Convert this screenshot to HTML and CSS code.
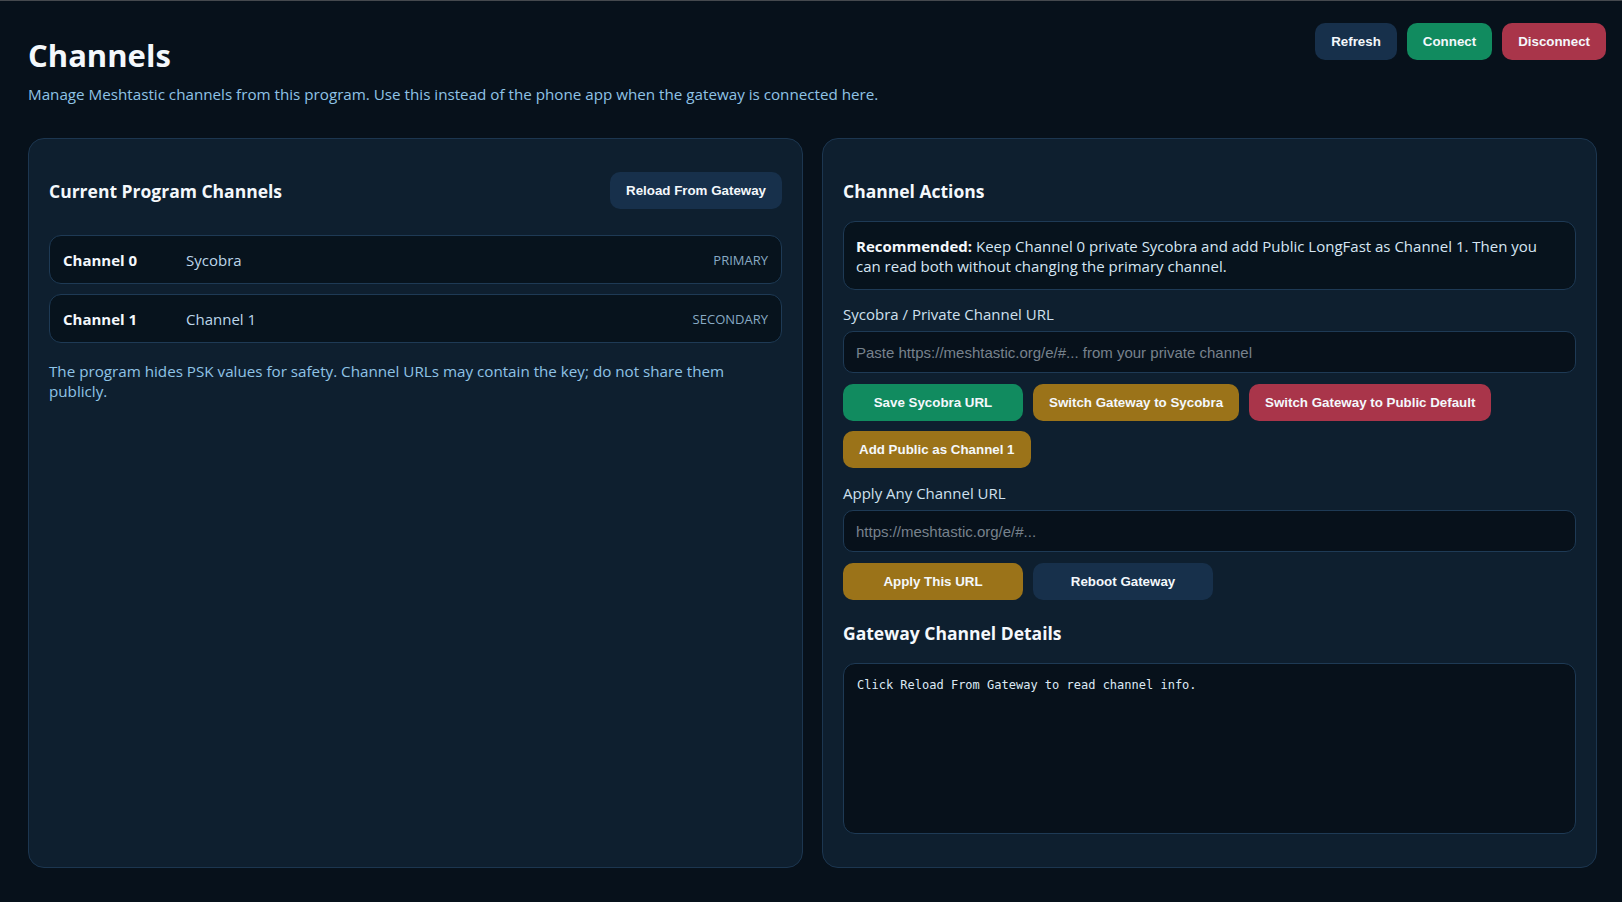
FILE: index.html
```html
<!DOCTYPE html>
<html>

<head>
    <meta charset="utf-8">
    <title>Channels</title>
    <link rel="stylesheet" href="styles.css">
</head>

<body>
    <header class="top">
        <div class="intro">
            <h1>Channels</h1>
            <p class="sub">Manage Meshtastic channels from this program. Use this instead of the phone app when the gateway is connected here.</p>
        </div>
        <div class="top-actions">
            <button class="btn btn-blue">Refresh</button>
            <button class="btn btn-green">Connect</button>
            <button class="btn btn-red">Disconnect</button>
        </div>
    </header>

    <main class="panels">
        <!-- channels stored in the program -->
        <section class="card">
            <div class="card-head">
                <h2>Current Program Channels</h2>
                <button class="btn btn-blue">Reload From Gateway</button>
            </div>
            <div class="chan-list">
                <div class="chan-row">
                    <span class="chan-idx">Channel 0</span>
                    <span class="chan-name">Sycobra</span>
                    <span class="chan-role">Primary</span>
                </div>
                <div class="chan-row">
                    <span class="chan-idx">Channel 1</span>
                    <span class="chan-name">Channel 1</span>
                    <span class="chan-role">Secondary</span>
                </div>
            </div>
            <p class="note">The program hides PSK values for safety. Channel URLs may contain the key; do not share them publicly.</p>
        </section>

        <!-- actions sent to the gateway -->
        <section class="card">
            <div class="card-head">
                <h2>Channel Actions</h2>
            </div>
            <p class="tip"><b>Recommended:</b> Keep Channel 0 private Sycobra and add Public LongFast as Channel 1. Then you can read both without changing the primary channel.</p>

            <label class="field-label" for="privUrl">Sycobra / Private Channel URL</label>
            <input class="field" id="privUrl" placeholder="Paste https://meshtastic.org/e/#... from your private channel">
            <div class="btn-row">
                <button class="btn btn-wide btn-green">Save Sycobra URL</button>
                <button class="btn btn-wide btn-gold">Switch Gateway to Sycobra</button>
                <button class="btn btn-wide btn-red">Switch Gateway to Public Default</button>
                <button class="btn btn-wide btn-gold">Add Public as Channel 1</button>
            </div>

            <label class="field-label after-btns" for="anyUrl">Apply Any Channel URL</label>
            <input class="field" id="anyUrl" placeholder="https://meshtastic.org/e/#...">
            <div class="btn-row">
                <button class="btn btn-wide btn-gold">Apply This URL</button>
                <button class="btn btn-wide btn-blue">Reboot Gateway</button>
            </div>

            <h2 class="sub-head">Gateway Channel Details</h2>
            <pre class="details">Click Reload From Gateway to read channel info.</pre>
        </section>
    </main>
</body>

</html>
```

FILE: styles.css
```css
body {
    margin: 0;
    background: #07111b;
    border-top: 1px solid #45494e;
    color: #e8f1f8;
    font-family: "Open Sans", "Noto Sans", sans-serif;
}

.top {
    display: flex;
    justify-content: space-between;
    align-items: flex-start;
    padding: 22px 16px 0 28px;
}

h1 {
    margin: 12px 0 0;
    font-size: 31px;
    line-height: 40px;
    font-weight: 700;
    color: #f4f8fc;
}

.sub {
    margin: 9px 0 0;
    font-size: 15.2px;
    line-height: 20px;
    color: #8fc3e6;
}

.top-actions {
    display: flex;
    gap: 10px;
}

.btn {
    height: 37px;
    padding: 0 16px;
    border: 0;
    border-radius: 10px;
    font-family: "Liberation Sans", Arial, sans-serif;
    font-size: 13.333px;
    font-weight: 700;
    color: #f4f8fc;
    cursor: pointer;
}

.btn-wide {
    min-width: 180px;
}

.btn-blue {
    background: #17304b;
}

.btn-green {
    background: #118b5f;
}

.btn-red {
    background: #a9354a;
}

.btn-gold {
    background: #9b7319;
}

.panels {
    display: grid;
    grid-template-columns: 1fr 1fr;
    gap: 19px;
    margin: 34px 25px 36px 28px;
}

.card {
    background: #0e1f2f;
    border: 1px solid #1c3650;
    border-radius: 16px;
    padding: 20px;
}

.card-head {
    display: flex;
    justify-content: space-between;
    align-items: center;
    min-height: 37px;
    margin-top: 13px;
}

h2 {
    margin: 0;
    font-size: 17.5px;
    font-weight: 700;
    color: #f4f8fc;
}

.chan-list {
    display: flex;
    flex-direction: column;
    gap: 10px;
    margin-top: 26px;
}

.chan-row {
    display: flex;
    align-items: center;
    height: 47px;
    padding: 0 13px;
    background: #07131d;
    border: 1px solid #1e3a55;
    border-radius: 12px;
    font-size: 15px;
}

.chan-idx {
    width: 123px;
    font-weight: 700;
    color: #f4f8fc;
}

.chan-name {
    flex: 1;
    color: #bcd6ea;
}

.chan-role {
    font-size: 13px;
    text-transform: uppercase;
    color: #88aac4;
}

.note {
    max-width: 700px;
    margin: 18px 0 0;
    font-size: 15.2px;
    line-height: 20px;
    color: #8fc3e6;
}

.tip {
    margin: 12px 0 0;
    padding: 14px 12px 13px;
    background: #07131d;
    border: 1px solid #1e3a55;
    border-radius: 12px;
    font-size: 15px;
    line-height: 20px;
    color: #d6e6f3;
}

.tip b {
    color: #f4f8fc;
}

.field-label {
    display: block;
    margin-top: 14px;
    font-size: 15px;
    line-height: 20px;
    color: #cfe0ee;
}

.field-label.after-btns {
    margin-top: 15px;
}

.field {
    display: block;
    box-sizing: border-box;
    width: 100%;
    height: 42px;
    margin-top: 7px;
    padding: 0 12px;
    background: #07111b;
    border: 1px solid #1e3a55;
    border-radius: 10px;
    font-family: "Liberation Sans", Arial, sans-serif;
    font-size: 15px;
    color: #e8f1f8;
}

.field::placeholder {
    color: #77828d;
}

.btn-row {
    display: flex;
    flex-wrap: wrap;
    gap: 10px;
    margin-top: 11px;
}

.sub-head {
    margin-top: 21px;
    line-height: 24px;
}

.details {
    box-sizing: border-box;
    min-height: 171px;
    margin: 18px 0 13px;
    padding: 14px 13px;
    background: #07111b;
    border: 1px solid #1e3a55;
    border-radius: 12px;
    font-family: "DejaVu Sans Mono", monospace;
    font-size: 12px;
    color: #dde9f4;
}
```
